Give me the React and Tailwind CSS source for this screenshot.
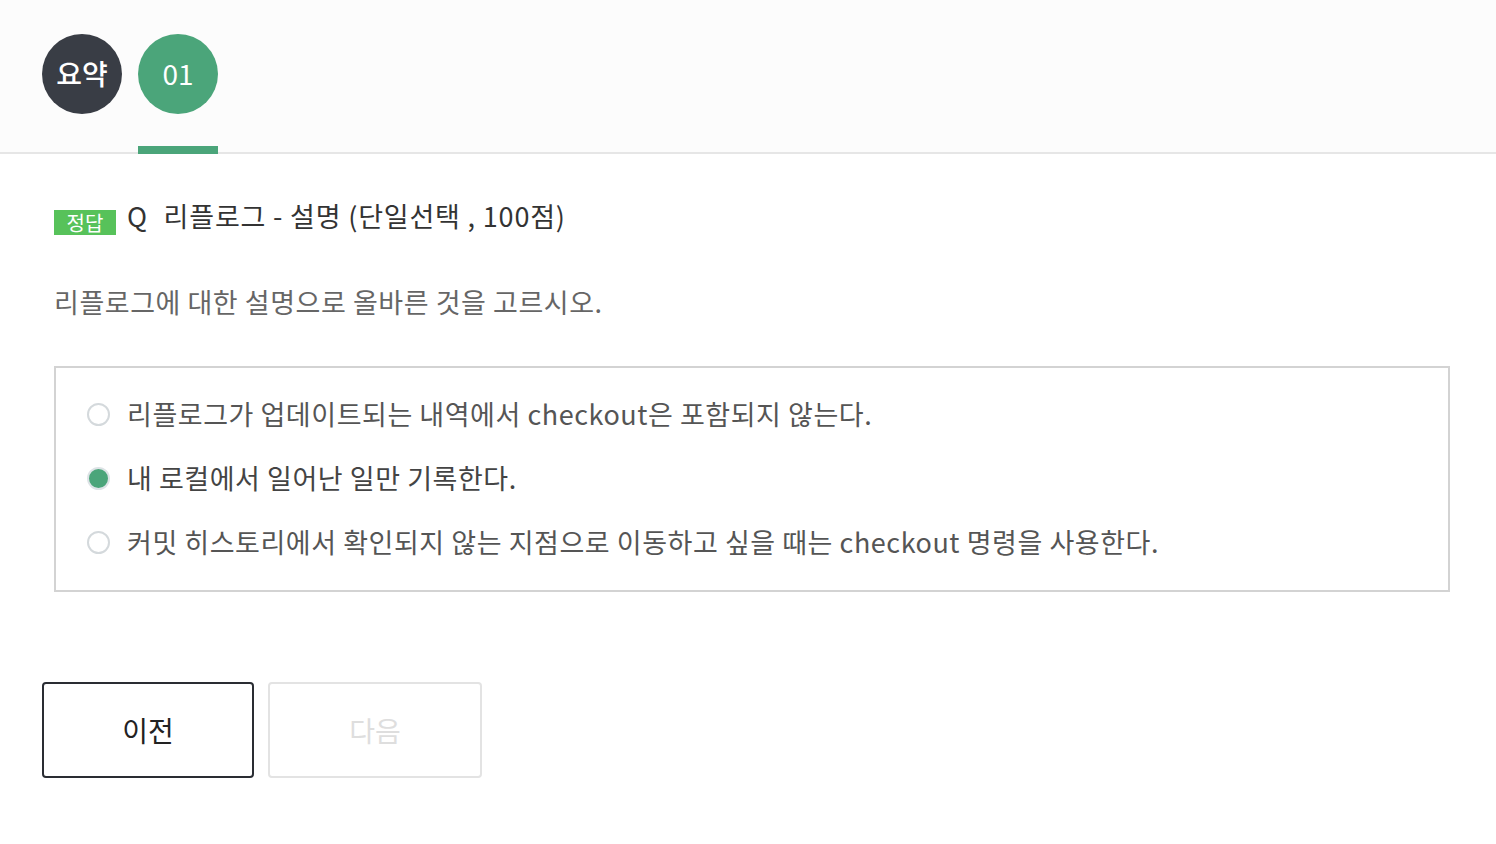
import React, { useState } from "react";

const font = { fontFamily: '"Noto Sans CJK KR", "Noto Sans", sans-serif' };

const options = [
  "리플로그가 업데이트되는 내역에서 checkout은 포함되지 않는다.",
  "내 로컬에서 일어난 일만 기록한다.",
  "커밋 히스토리에서 확인되지 않는 지점으로 이동하고 싶을 때는 checkout 명령을 사용한다.",
];

const App = () => {
  const [selected, setSelected] = useState(1);

  return (
    <div className="min-h-screen w-full bg-white" style={font}>
      {/* Tabs */}
      <div className="h-[154px] bg-[#fcfcfc] border-b-2 border-[#e6e6e6] px-[42px] flex items-end">
        <div className="flex gap-4">
          <div className="flex flex-col items-center">
            <div className="w-20 h-20 rounded-full bg-[#393d45] text-white text-[28px] font-medium leading-none pb-[3px] flex items-center justify-center">
              요약
            </div>
            <div className="h-[8px] w-20 mt-[32px] -mb-[2px]" />
          </div>
          <div className="flex flex-col items-center">
            <div className="w-20 h-20 rounded-full bg-[#4ba57a] text-white text-[28px] leading-none pb-[3px] flex items-center justify-center">
              01
            </div>
            <div className="h-[8px] w-20 bg-[#4ba57a] mt-[32px] -mb-[2px]" />
          </div>
        </div>
      </div>

      <div className="pl-[54px] pr-[46px] pt-[46px]">
        {/* Title */}
        <div className="flex items-start h-[32px]">
          <span className="mt-[10px] bg-[#57c25a] text-white text-[20px] leading-[25px] h-[25px] w-[62px] flex items-center justify-center">
            정답
          </span>
          <span className="ml-[11px] text-[27px] leading-[32px] text-[#333] tracking-[0.02em]">
            Q
          </span>
          <span className="ml-[16px] text-[27px] leading-[32px] text-[#333] tracking-[0.03em]">
            리플로그 - 설명 (단일선택 , 100점)
          </span>
        </div>

        {/* Question */}
        <p className="mt-[54px] text-[27px] leading-[32px] text-[#666] tracking-[0.02em]">
          리플로그에 대한 설명으로 올바른 것을 고르시오.
        </p>

        {/* Options */}
        <div className="mt-[48px] border-2 border-[#d3d3d3] px-[31px] pt-[30px] pb-[32px] flex flex-col gap-[32px]">
          {options.map((opt, i) => (
            <label
              key={i}
              className="flex items-center h-[32px] cursor-pointer"
              onClick={() => setSelected(i)}
            >
              {selected === i ? (
                <span className="w-[23px] h-[23px] rounded-full bg-[#4ba57a] border-2 border-[#dde3e6]" />
              ) : (
                <span className="w-[23px] h-[23px] rounded-full bg-white border-2 border-[#d4d9dc]" />
              )}
              <span
                className={
                  "ml-[17px] text-[27px] leading-[32px] tracking-[0.02em] " +
                  (selected === i ? "text-[#444]" : "text-[#555]")
                }
              >
                {opt}
              </span>
            </label>
          ))}
        </div>
      </div>

      {/* Buttons */}
      <div className="px-[42px] mt-[90px] flex gap-[14px]">
        <button className="w-[212px] h-[96px] border-2 border-[#2a2d33] rounded-[4px] text-[28px] text-[#222] bg-white">
          이전
        </button>
        <button
          disabled
          className="w-[214px] h-[96px] border-2 border-[#e3e3e3] rounded-[4px] text-[28px] text-[#dedede] bg-white"
        >
          다음
        </button>
      </div>
    </div>
  );
};

export default App;
